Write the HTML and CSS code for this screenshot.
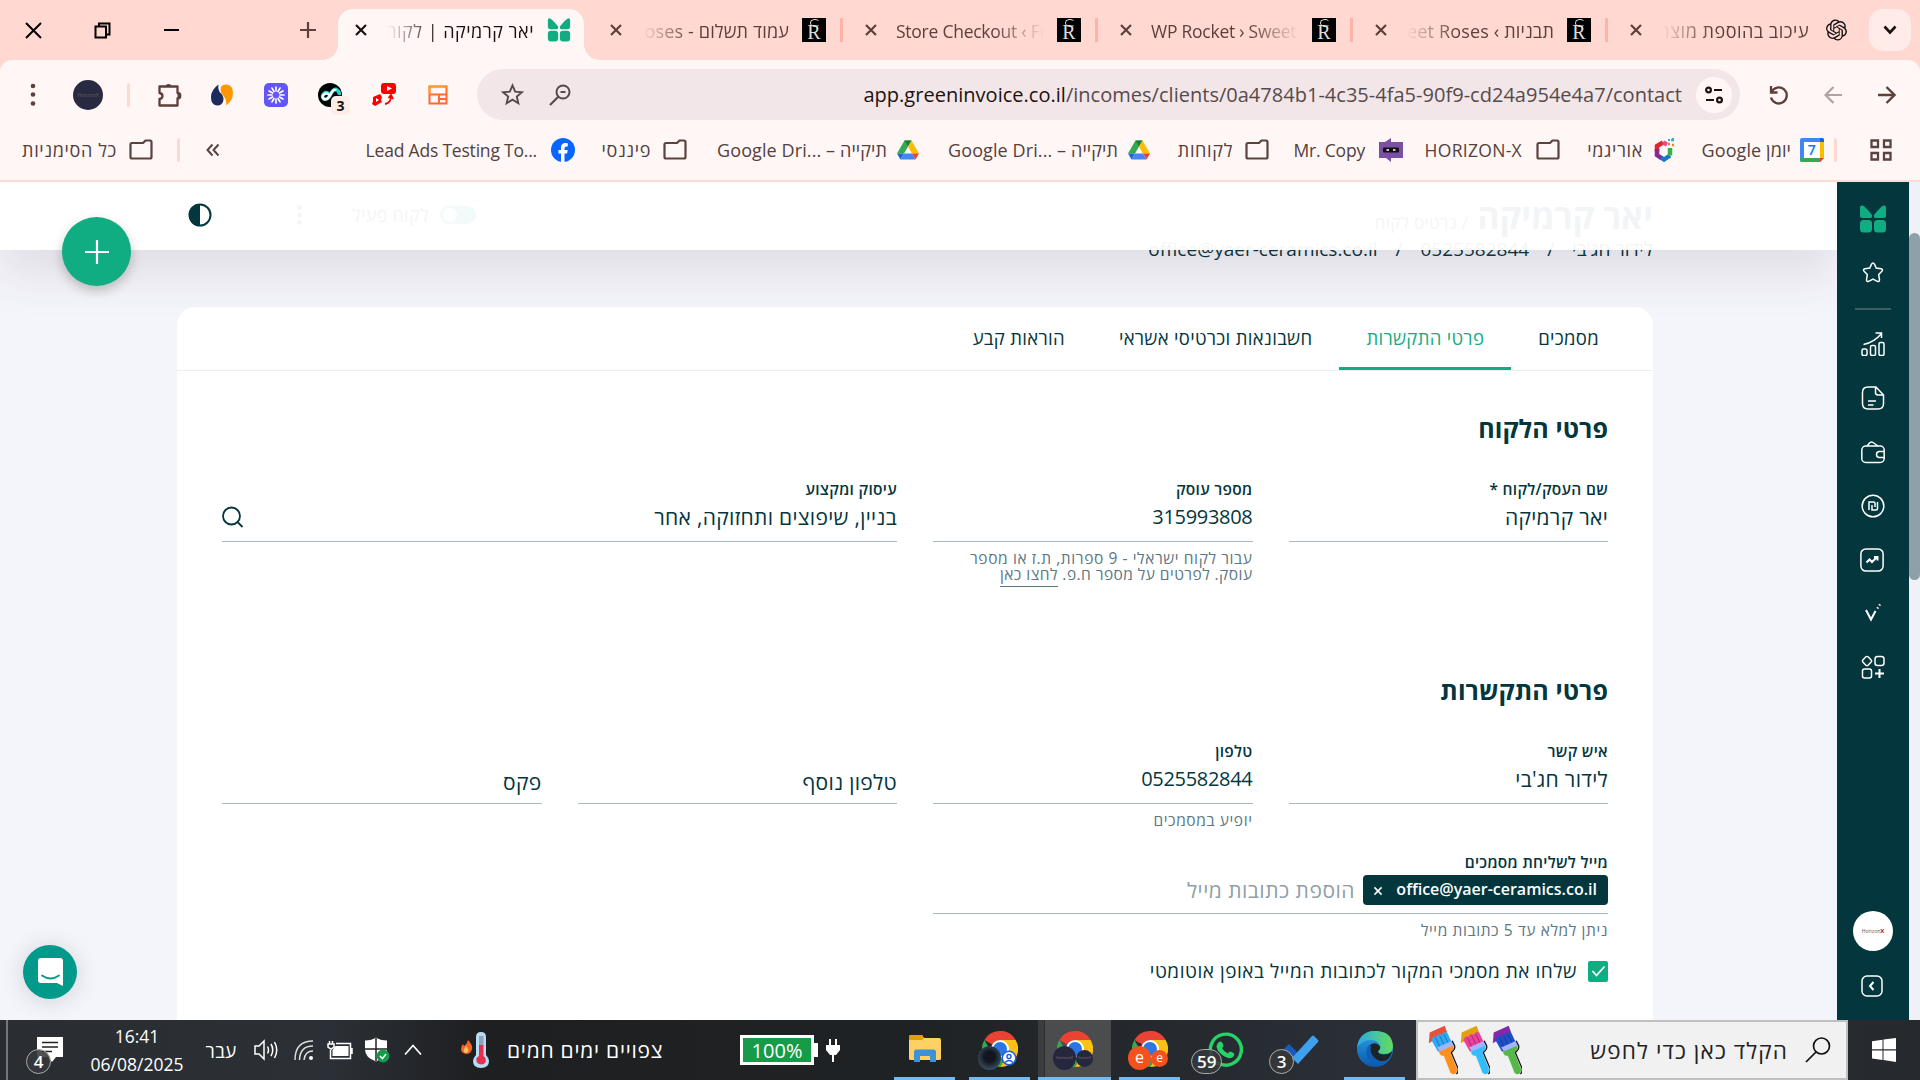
FILE: index.html
```html
<!DOCTYPE html>
<html lang="he">
<head>
<meta charset="utf-8">
<title>יאר קרמיקה | לקוח</title>
<link rel="stylesheet" href="styles.css">
</head>
<body>
<svg class="defs" aria-hidden="true">
  <symbol id="x" viewBox="0 0 14 14"><path d="M2 2l10 10M12 2L2 12" fill="none" stroke="currentColor" stroke-width="2.2"/></symbol>
  <symbol id="folder" viewBox="0 0 24 24"><path d="M1.500 6.500q0-1.500 1.500-1.500h11l2.500-2.500h4.500q1.500 0 1.500 1.500v15q0 1.500-1.500 1.500H3q-1.500 0-1.500-1.500z" fill="none" stroke="#5a4240" stroke-width="2.200" stroke-linejoin="round"/></symbol>
  <symbol id="drive" viewBox="0 0 24 24"><path d="M8.500 2.500h7L8 15.500H1z" fill="#34a853"/><path d="M8.500 2.500h7l-3.500 6z" fill="#188038"/><path d="M15.500 2.500L23 15.500h-7l-4-7z" fill="#fbbc04"/><path d="M1 15.500h7l-3.500 6z" fill="#1967d2"/><path d="M8 15.500h8l3.500 6h-15z" fill="#4285f4"/><path d="M16 15.500h7l-3.500 6z" fill="#ea4335"/></symbol>
  <symbol id="clover" viewBox="0 0 28 28"><path d="M1 2.500Q1 0 3.500 .5Q6 1 13 10v1.500q0 1.500-1.500 1.500h-8Q1 13 1 10.500zM27 2.500Q27 0 24.500 .5Q22 1 15 10v1.500q0 1.500 1.500 1.500h8Q27 13 27 10.500z" fill="#11ad82"/><rect x="1" y="15" width="12" height="12.500" rx="3.500" fill="#11ad82"/><rect x="15" y="15" width="12" height="12.500" rx="3.500" fill="#11ad82"/></symbol>
  <symbol id="chrome" viewBox="0 0 36 36"><path d="M18 18L2.400 9A18 18 0 0 1 33.600 9z" fill="#ea4335"/><path d="M18 0a18 18 0 0 1 15.600 9H18z" fill="#ea4335"/><path d="M33.600 9A18 18 0 0 1 18 36L25.800 22.500 18 9z" fill="#fbc116"/><path d="M2.400 9A18 18 0 0 0 18 36l7.800-13.500H10.200z" fill="#34a853"/><circle cx="18" cy="18" r="9" fill="#fff"/><circle cx="18" cy="18" r="7" fill="#2a76e8"/></symbol>
  <symbol id="brush" viewBox="0 0 36 60"><path d="M1 22L2 9 20 1l3 8-8 5-6 1-3 4z" fill="var(--tip)"/><path d="M4 18q3-6 6-4 3-5 6-2 3-5 7-3l7 15-18 8z" fill="var(--hair)"/><path d="M9 15l6 13M14 13l6 12M19 11l6 12" stroke="#0a1a50" stroke-opacity=".45" fill="none"/><path d="M11 27l18-8 3 6-4 4-12 5z" fill="#a3b4ff"/><path d="M13 32l17-7q2 5-3 8l8 20q0 6-5 6-3 0-4-4l-7-18q-5 0-6-5z" fill="var(--handle)"/><path d="M29 19l3 6q1 4-4 8l8 19q1 4-2 7" fill="none" stroke="#111" stroke-width="1.500"/></symbol>
</svg>

<header class="browser">
  <div class="tabstrip">
    <div class="window-controls">
      <svg width="17" height="17" viewBox="0 0 17 17"><path d="M1 1l15 15M16 1L1 16" stroke="#000" stroke-width="2"/></svg>
      <svg width="17" height="17" viewBox="0 0 17 17"><path d="M1.500 4.500h10.500v11H1.500zM5 4.500V1.500h10.500V12.500H12" fill="none" stroke="#000" stroke-width="2"/></svg>
      <svg width="17" height="17" viewBox="0 0 17 17"><path d="M1 8h15" stroke="#000" stroke-width="2"/></svg>
    </div>
    <div class="new-tab"><svg width="16" height="16" viewBox="0 0 16 16"><path d="M8 0v16M0 8h16" stroke="#5d3f3b" stroke-width="2.200"/></svg></div>
    <div class="tab active"><svg class="close"><use href="#x"/></svg><span class="tab-title fade-left" dir="rtl">יאר קרמיקה | לקוח</span><svg class="favicon"><use href="#clover"/></svg></div>
    <div class="tab"><svg class="close"><use href="#x"/></svg><span class="tab-title fade-left end">oses - עמוד תשלום</span><span class="favicon rose">R</span></div>
    <div class="tab"><svg class="close"><use href="#x"/></svg><span class="tab-title fade-right en">Store Checkout ‹ Fu</span><span class="favicon rose">R</span></div>
    <div class="tab"><svg class="close"><use href="#x"/></svg><span class="tab-title fade-right en">WP Rocket › Sweet</span><span class="favicon rose">R</span></div>
    <div class="tab"><svg class="close"><use href="#x"/></svg><span class="tab-title fade-left end">veet Roses ‹ תבניות</span><span class="favicon rose">R</span></div>
    <div class="tab last"><svg class="close"><use href="#x"/></svg><span class="tab-title fade-left" dir="rtl">עיכוב בהוספת מוצר</span><svg class="favicon gpt" viewBox="0 0 24 24"><path fill="#111" d="M22.282 9.821a5.985 5.985 0 0 0-.516-4.910 6.046 6.046 0 0 0-6.510-2.900A6.065 6.065 0 0 0 4.981 4.180a5.985 5.985 0 0 0-3.998 2.900 6.046 6.046 0 0 0 .743 7.097 5.980 5.980 0 0 0 .510 4.911 6.051 6.051 0 0 0 6.515 2.900A5.985 5.985 0 0 0 13.260 24a6.056 6.056 0 0 0 5.772-4.206 5.990 5.990 0 0 0 3.997-2.900 6.056 6.056 0 0 0-.747-7.073zM13.260 22.430a4.476 4.476 0 0 1-2.876-1.040l.141-.081 4.779-2.758a.795.795 0 0 0 .392-.681v-6.737l2.020 1.168a.071.071 0 0 1 .038.052v5.583a4.504 4.504 0 0 1-4.494 4.494zM3.600 18.304a4.470 4.470 0 0 1-.535-3.014l.142.085 4.783 2.759a.771.771 0 0 0 .780 0l5.843-3.369v2.332a.080.080 0 0 1-.033.062L9.740 19.950a4.500 4.500 0 0 1-6.140-1.646zM2.340 7.896a4.485 4.485 0 0 1 2.366-1.973V11.600a.766.766 0 0 0 .388.676l5.815 3.355-2.020 1.168a.076.076 0 0 1-.071 0l-4.830-2.786A4.504 4.504 0 0 1 2.340 7.872zm16.597 3.855l-5.833-3.387L15.119 7.200a.076.076 0 0 1 .071 0l4.830 2.791a4.494 4.494 0 0 1-.676 8.105v-5.678a.790.790 0 0 0-.407-.667zm2.010-3.023l-.141-.085-4.774-2.782a.776.776 0 0 0-.785 0L9.409 9.230V6.897a.066.066 0 0 1 .028-.061l4.830-2.787a4.500 4.500 0 0 1 6.680 4.660zm-12.640 4.135l-2.020-1.164a.080.080 0 0 1-.038-.057V6.075a4.500 4.500 0 0 1 7.375-3.453l-.142.080-4.778 2.758a.795.795 0 0 0-.393.681zm1.097-2.365l2.602-1.500 2.607 1.500v2.999l-2.597 1.500-2.607-1.500z"/></svg></div>
    <div class="tab-search"><svg width="14" height="10" viewBox="0 0 14 10"><path d="M1.500 1.500L7 7.500l5.500-6" fill="none" stroke="#1d1110" stroke-width="2.600"/></svg></div>
  </div>

  <div class="toolbar">
    <div><svg width="6" height="26" viewBox="0 0 6 26" fill="#5d3f3b"><circle cx="3" cy="4" r="2.300"/><circle cx="3" cy="12.500" r="2.300"/><circle cx="3" cy="21.500" r="2.300"/></svg></div>
    <div><span class="profile">HorizonX</span></div>
    <div><i class="divider"></i></div>
    <div><svg width="26" height="26" viewBox="0 0 26 26"><path d="M2.500 4.500h18v6.500a2.600 2.600 0 0 1 0 5.500v7h-18v-6.500q3-.5 3-3t-3-3z" fill="none" stroke="#5d3f3b" stroke-width="2.300" stroke-linejoin="round"/><path d="M8.500 5a3 3 0 0 1 6 0zM20.500 11a2.600 2.600 0 0 1 0 5.500z" fill="#5d3f3b"/></svg></div>
    <div><svg width="24" height="24" viewBox="0 0 24 24"><path d="M8.500 1.500Q1 7 1 14q0 8 6 8.500 6 0 6.500-6 0-4-3-6.500-3-3-2-8.500z" fill="#1d2a5e"/><path d="M16 22.500q7-5 7-12.500 0-8-6.500-8.500-6 0-6 5 0 3.500 3 6.500 3.500 3.500 2.500 9.500z" fill="#ff9800"/></svg></div>
    <div><svg width="24" height="24" viewBox="0 0 24 24"><rect width="24" height="24" rx="5" fill="#6355f6"/><g stroke="#fff" stroke-width="1.700" stroke-linecap="round"><path d="M12 4v4M12 16v4M4 12h4M16 12h4"/><path d="M12 4v4M12 16v4M4 12h4M16 12h4" transform="rotate(30 12 12)"/><path d="M12 4v4M12 16v4M4 12h4M16 12h4" transform="rotate(60 12 12)"/></g></svg></div>
    <div class="counter"><svg width="24" height="24" viewBox="0 0 24 24"><circle cx="12" cy="12" r="12" fill="#000"/><path d="M12 12q-3-4-6-1.500t0 5.500q3 1 5-2l3-5q2-4 5-2t2 5" fill="none" stroke="#25d6d0" stroke-width="3.500"/><path d="M12 13q-3-4-6-1.500t0 4.500q3 1 5-2l3-5q2-3 4-1.500" fill="none" stroke="#fff" stroke-width="2.400"/></svg><b>3</b></div>
    <div><svg width="26" height="26" viewBox="0 0 26 26"><rect x="10" y="1" width="15" height="11" rx="3" fill="#f00"/><path d="M16 4l5 2.500-5 2.500z" fill="#fff"/><path d="M2 15l7-3 2 3-1 3 1 2-7 4-3-2 1-3z" fill="#f00"/><path d="M5 16l3 2-3 2z" fill="#fff"/><path d="M14 22q6-1 6-8M17.500 16l2.500-3 2 4" fill="none" stroke="#f00" stroke-width="1.800"/></svg></div>
    <div><svg width="20" height="20" viewBox="0 0 20 20"><path d="M1.500 1.500h17v17h-17zM1.500 9.500h17M11 9.500v9M11 14h7" fill="none" stroke="#ff6b35" stroke-width="2"/><path d="M1.500 9V1.500h17" fill="none" stroke="#ff9d2e" stroke-width="2"/></svg></div>
    <div class="omnibox">
      <svg class="star" width="23" height="23" viewBox="0 0 24 24"><path d="M12 2.500l2.800 6.500 7 .6-5.300 4.600 1.600 6.900L12 17.400l-6.100 3.700 1.600-6.900L2.200 9.600l7-.6z" fill="none" stroke="#574a4b" stroke-width="2"/></svg>
      <svg class="lens" width="22" height="22" viewBox="0 0 22 22"><circle cx="14" cy="8" r="6.500" fill="none" stroke="#574a4b" stroke-width="2"/><path d="M9.500 12.500L1 21M11.500 8h5" stroke="#574a4b" stroke-width="2.200"/></svg>
      <span class="url"><b>app.greeninvoice.co.il</b>/incomes/clients/0a4784b1-4c35-4fa5-90f9-cd24a954e4a7/contact</span>
      <span class="site-info"><svg width="18" height="18" viewBox="0 0 18 18" fill="none" stroke="#1d1110" stroke-width="2.200"><circle cx="3.500" cy="4" r="2.400"/><path d="M9 4h8M1 14h8"/><circle cx="14.500" cy="14" r="2.400"/></svg></span>
    </div>
    <div><svg width="20" height="20" viewBox="0 0 20 20"><path d="M2 1v6.500h6.500M2.500 7A8 8 0 1 1 2 12.500" fill="none" stroke="#5d3f3b" stroke-width="2.300"/></svg></div>
    <div class="back"><svg width="18" height="18" viewBox="0 0 18 18"><path d="M18 9H2M9.500 1L1.500 9l8 8" fill="none" stroke="#b3a19f" stroke-width="2.200"/></svg></div>
    <div class="forward"><svg width="18" height="18" viewBox="0 0 18 18"><path d="M0 9h16M8.500 1l8 8-8 8" fill="none" stroke="#5d3f3b" stroke-width="2.400"/></svg></div>
  </div>

  <div class="bookmarks">
    <div><span>כל הסימניות</span><svg class="bm"><use href="#folder"/></svg></div>
    <div class="mid"><i class="divider"></i></div>
    <div class="more"><svg width="14" height="14" viewBox="0 0 14 14"><path d="M6.500 1.500L1.500 7l5 5.500M12.500 1.500L7.500 7l5 5.500" fill="none" stroke="#5a4240" stroke-width="2"/></svg></div>
    <div><span class="en">Lead Ads Testing To...</span><svg class="bm" viewBox="0 0 24 24"><circle cx="12" cy="12" r="12" fill="#0866ff"/><path d="M10 24v-8.500H7.500V12H10V9.500q0-4.500 4.500-4.500l2.300.2v3.200h-1.500q-1.800 0-1.800 1.800V12h3.200l-.6 3.500h-2.600V24z" fill="#fff"/></svg></div>
    <div><span>פיננסי</span><svg class="bm"><use href="#folder"/></svg></div>
    <div class="near"><span class="mix">Google Dri... – תיקייה</span><svg class="bm"><use href="#drive"/></svg></div>
    <div class="near"><span class="mix">Google Dri... – תיקייה</span><svg class="bm"><use href="#drive"/></svg></div>
    <div><span>לקוחות</span><svg class="bm"><use href="#folder"/></svg></div>
    <div><span class="en">Mr. Copy</span><svg class="bm" viewBox="0 0 24 24"><path d="M0 4h6l6-4v4h12v16H12v4l-5-4H0z" fill="#7b4fa3"/><rect x="4" y="9.500" width="16" height="5" rx="1" fill="#111"/><path d="M7.500 12h2.500M14 12h2.500" stroke="#fff" stroke-width="1.600"/></svg></div>
    <div><span class="en caps">HORIZON-X</span><svg class="bm"><use href="#folder"/></svg></div>
    <div class="near"><span>אוריגמי</span><svg class="bm" viewBox="0 0 24 24" fill="none" stroke-width="4.500"><path d="M5 14V8l6-3.500" stroke="#e0242c"/><path d="M11 4.500l4 2" stroke="#f0458a"/><path d="M5 11v6l5 3.500" stroke="#8e2490"/><path d="M9 19.500l3 2 6-4" stroke="#1878c8"/><path d="M18 17.500V10" stroke="#35b04a"/><path d="M19 2h3M16 6h2M20 7h2" stroke="#f58220" stroke-width="2.500"/><path d="M21 0v3M17 1v2" stroke="#19b5d8" stroke-width="2"/></svg></div>
    <div class="near"><span class="mix">Google יומן</span><svg class="bm" viewBox="0 0 24 24"><path d="M0 2q0-2 2-2h20q2 0 2 2v18l-4 4H2q-2 0-2-2z" fill="#4285f4"/><path d="M20 4h4v16h-4z" fill="#fbbc04"/><path d="M20 0h2q2 0 2 2v2h-4z" fill="#1967d2"/><path d="M0 20h20v4H2q-2 0-2-2z" fill="#34a853"/><path d="M20 20h4l-4 4z" fill="#ea4335"/><rect x="4" y="4" width="16" height="16" fill="#fff"/><text x="12" y="17" text-anchor="middle" font-size="14" font-family="Open Sans" font-weight="600" fill="#1a73e8">7</text></svg></div>
    <div class="mid"><i class="divider"></i></div>
    <div><svg width="22" height="22" viewBox="0 0 22 22" fill="none" stroke="#5a4240" stroke-width="2.300"><path d="M1.500 1.500h6.500v6.500H1.500zM14 1.500h6.500v6.500H14zM1.500 14h6.500v6.500H1.500zM14 14h6.500v6.500H14z"/></svg></div>
  </div>
</header>

<main class="app">
  <section class="page">
    <div class="client-head">
      <div class="client-status">
        <svg width="5" height="20" viewBox="0 0 5 20" fill="#03363d"><circle cx="2.500" cy="2.500" r="2.200"/><circle cx="2.500" cy="10" r="2.200"/><circle cx="2.500" cy="17.500" r="2.200"/></svg>
        <span>לקוח פעיל</span><i class="toggle"></i>
      </div>
      <div class="client-title" dir="rtl">
        <h1>יאר קרמיקה <small>/ כרטיס לקוח</small></h1>
        <p><span>לידור חג'בי</span><span>/</span><span>0525582844</span><span>/</span><span>office@yaer-ceramics.co.il</span></p>
      </div>
    </div>

    <div class="card" dir="rtl">
      <nav class="tabs">
        <a>מסמכים</a><a class="on">פרטי התקשרות</a><a>חשבונאות וכרטיסי אשראי</a><a>הוראות קבע</a>
      </nav>
      <h2>פרטי הלקוח</h2>
      <div class="fields first">
        <div class="field"><label>שם העסק/לקוח *</label><div class="value">יאר קרמיקה</div></div>
        <div class="field"><label>מספר עוסק</label><div class="value num">315993808</div>
          <p class="hint">עבור לקוח ישראלי - 9 ספרות, ת.ז או מספר<br><span class="tight">עוסק. לפרטים על מספר ח.פ. <u>לחצו כאן</u></span></p></div>
        <div class="field wide"><label>עיסוק ומקצוע</label><div class="value">בניין, שיפוצים ותחזוקה, אחר
          <svg width="22" height="22" viewBox="0 0 22 22"><circle cx="9.500" cy="10" r="8.500" fill="none" stroke="#03363d" stroke-width="1.800"/><path d="M15.500 16l5 5" stroke="#03363d" stroke-width="1.800"/></svg></div></div>
      </div>
      <h2>פרטי התקשרות</h2>
      <div class="fields second">
        <div class="field"><label>איש קשר</label><div class="value">לידור חג'בי</div></div>
        <div class="field"><label>טלפון</label><div class="value num">0525582844</div><p class="hint">יופיע במסמכים</p></div>
        <div class="field empty"><div class="value">טלפון נוסף</div></div>
        <div class="field empty"><div class="value">פקס</div></div>
      </div>
      <div class="fields mail">
        <div class="field wide"><label>מייל לשליחת מסמכים</label>
          <div class="mails"><span class="chip">office@yaer-ceramics.co.il<svg width="10" height="10"><use href="#x"/></svg></span><span class="placeholder">הוספת כתובות מייל</span></div>
          <p class="hint">ניתן למלא עד 5 כתובות מייל</p></div>
      </div>
      <div class="check"><i><svg width="15" height="12" viewBox="0 0 15 12"><path d="M1.500 6l4 4.500L13.500 1.500" fill="none" stroke="#fff" stroke-width="1.700"/></svg></i><span>שלחו את מסמכי המקור לכתובות המייל באופן אוטומטי</span></div>
    </div>

    <div class="topbar"><svg width="24" height="24" viewBox="0 0 24 24"><circle cx="12" cy="12" r="10.500" fill="#fff" stroke="#03363d" stroke-width="2"/><path d="M12 1a11 11 0 0 0 0 22z" fill="#03363d"/></svg></div>
    <div class="fab"><svg width="24" height="24" viewBox="0 0 24 24"><path d="M12 0v24M0 12h24" stroke="#fff" stroke-width="2.200"/></svg></div>
    <div class="chat"><svg width="25" height="28" viewBox="0 0 25 28"><path d="M3 0h19q3 0 3 3v25l-6-3H3q-3 0-3-3V3q0-3 3-3z" fill="#fff"/><path d="M4 17.500q8.500 6 17 0" fill="none" stroke="#00998a" stroke-width="1.800" stroke-linecap="round"/></svg></div>
  </section>

  <aside class="sidebar">
    <div><svg width="28" height="28"><use href="#clover"/></svg></div>
    <div><svg class="ic" viewBox="0 0 24 24"><path d="M10.500 3.200q1.500-2.400 3 0l1.700 3.900 4.800.7q2.500.6.900 2.500l-3.200 3.300.8 5.200q0 2.300-2.200 1.500L12 18l-4.300 2.300q-2.200.8-2.200-1.500l.8-5.200-3.200-3.300q-1.600-1.900.9-2.500l4.800-.7z"/></svg></div>
    <div><hr></div>
    <div><svg class="ic" viewBox="0 0 24 24"><rect x="1" y="17" width="5" height="6.500" rx="1.500"/><rect x="9.500" y="13.500" width="5" height="10" rx="1.500"/><rect x="18" y="10.500" width="5" height="13" rx="1.500"/><path d="M2.500 12.500Q13 10.500 20.500 1.500M14.500 1h6v5"/></svg></div>
    <div><svg class="ic" viewBox="0 0 24 24"><path d="M7 1h8l7.500 8v8.500q0 5.500-5.500 5.500H7q-5.500 0-5.500-5.500v-11Q1.500 1 7 1zM14.500 1v5.500q0 2.500 2.500 2.500h5.500M7 15h8M7 19h5.500"/></svg></div>
    <div><svg class="ic" viewBox="0 0 24 24"><rect x=".8" y="6" width="22.400" height="16.500" rx="4"/><path d="M6 6l3-3.500q1.500-1 3 0L17 6M23 11.500h-4.500a3 3 0 0 0 0 6H23"/></svg></div>
    <div><svg class="ic" viewBox="0 0 24 24"><circle cx="12" cy="12" r="10.800"/><path d="M8 16V8h4.500q1.500 0 1.500 1.500V13M16.500 8v6.500q0 1.500-1.500 1.500H11v-5"/></svg></div>
    <div><svg class="ic sq" viewBox="0 0 24 24"><rect x=".9" y=".9" width="22.200" height="22.200" rx="5"/><path d="M6.500 14.500l3-3 2.500 2.500 4.500-4.500M14 9h3.500v3.500" stroke-width="2"/></svg></div>
    <div><svg class="ic" viewBox="0 0 24 24"><path d="M5 9l5 9.500 4.500-8.500" stroke-width="2"/><path d="M16.300 7.500l.8-1.200M18.300 4.500l.8-1.200" stroke-width="2.200"/></svg></div>
    <div><svg class="ic" viewBox="0 0 24 24"><rect x="2.300" y="2.300" width="7.400" height="7.400" rx="1.500" transform="rotate(45 6 6)"/><rect x="14" y="1.500" width="9" height="9" rx="2.500"/><rect x="1.500" y="14" width="9" height="9" rx="2"/><path d="M18.500 14v9M14 18.500h9" stroke-width="2"/></svg></div>
    <div class="user"><span>Horizon<b>X</b></span></div>
    <div class="collapse"><svg class="ic sq" viewBox="0 0 24 24"><rect x="2" y="2" width="20" height="20" rx="5"/><path d="M13.500 8L10 12l3.500 4" stroke-width="2"/></svg></div>
  </aside>
  <div class="scrollbar"><i></i></div>
</main>

<footer class="taskbar">
  <div class="notif"><svg width="26" height="26" viewBox="0 0 26 26"><path d="M0 0h26v20h-7l-4 5-4-5H0z" fill="#fff"/><path d="M5 5.500h16M5 10h16M5 14.500h10" stroke="#222" stroke-width="1.300"/></svg><b class="badge">4</b></div>
  <div class="clock"><span>16:41</span><span>06/08/2025</span></div>
  <div class="lang">עבר</div>
  <div class="tray">
    <svg width="24" height="22" viewBox="0 0 24 22" fill="none" stroke="#fff" stroke-width="1.500"><path d="M1 7h4l5-5v18l-5-5H1zM13.500 7.500q2 3.500 0 7M17 5q3.500 6 0 12M20.500 3q4.500 8 0 16"/></svg>
    <svg width="22" height="22" viewBox="0 0 22 22" fill="none" stroke="#ddd" stroke-width="1.500"><path d="M1 21Q1 2 19 2M5.500 21Q6 7 19 7M10 21q1-9 9-9"/><circle cx="17" cy="19" r="2" fill="#fff" stroke="none"/></svg>
    <svg width="26" height="20" viewBox="0 0 26 20"><path d="M8.500 6h13v10h-16v-6z" fill="#fff"/><path d="M9 3.500h14.500v15H3.500V10M25 8v6M1 4h6v3l-3 2-3-2zM2.500 4V1M5.500 4V1" fill="none" stroke="#fff" stroke-width="1.500"/></svg>
    <svg width="26" height="26" viewBox="0 0 26 26"><path d="M1 3q7 0 11-3 4 3 11 3v9q0 8-11 12Q1 20 1 12z" fill="#fff" transform="translate(0 .5)"/><path d="M12 1v23M1 12h22" stroke="#222" stroke-width="1.500"/><circle cx="19" cy="19" r="6.500" fill="#149b49"/><path d="M16 19l2.500 2.500L22 17" fill="none" stroke="#fff" stroke-width="1.500"/></svg>
    <svg width="18" height="12" viewBox="0 0 18 12"><path d="M1 10.500L9 1.500l8 9" fill="none" stroke="#fff" stroke-width="1.700"/></svg>
  </div>
  <div class="weather">
    <svg width="30" height="36" viewBox="0 0 30 36"><path d="M7 8q5 5 4 9-1 5-6 5-5-1-5-5 0-3 2-5l1 2q3-2 4-6z" fill="#f4622d"/><path d="M5 14q3 3 2 6-2 2-4 0-1-3 2-6z" fill="#ffc352"/><path d="M15 5q0-5 5-5t5 5v18q3 3 3 6 0 7-8 7t-8-7q0-3 3-6z" fill="#b9dcf5"/><path d="M18 13h4.500v11l2 2q1.500 6-4 6.500-6-.5-5-6.500l2.500-2z" fill="#e5304f"/><path d="M18 4h4.500v9H18z" fill="#8fa3b5"/></svg>
    <span>צפויים ימים חמים</span>
  </div>
  <div class="power"><span>100%</span><i></i><svg width="14" height="23" viewBox="0 0 14 23"><path d="M3 0h2v6h4V0h2v6h3v5l-4 5H8v7H6v-7H4l-4-5V6h3z" fill="#fff"/></svg></div>
  <div class="apps">
    <div class="open"><svg width="32" height="28" viewBox="0 0 32 28"><path d="M0 2q0-2 2-2h11l2 3h15q2 0 2 2v19q0 1-2 1H2q-2 0-2-1z" fill="#ffd162"/><path d="M0 2q0-2 2-2h11l2 3-2 2H0z" fill="#e0a100"/><path d="M5 27V17q0-2.500 2.500-2.500h17Q27 14.500 27 17v10h-6v-6H11v6z" fill="#3c92d8"/></svg></div>
    <div class="open"><svg width="36" height="36"><use href="#chrome"/></svg><em class="pic night"></em><em class="pic acct"><svg width="16" height="16" viewBox="0 0 16 16"><circle cx="8" cy="8" r="6.800" fill="#fff" stroke="#1a5fe0" stroke-width="1.600"/><circle cx="8" cy="6.500" r="2" fill="none" stroke="#1a5fe0" stroke-width="1.400"/><path d="M4 12.500q4-4 8 0" fill="none" stroke="#1a5fe0" stroke-width="1.400"/></svg></em></div>
    <div class="open current"><svg width="36" height="36"><use href="#chrome"/></svg><em class="pic navy">HorizonX</em><em class="pic navy sm">HorizonX</em></div>
    <div class="open"><svg width="36" height="36"><use href="#chrome"/></svg><em class="pic orange">e</em><em class="pic orange sm">e</em></div>
    <div class="wa"><svg width="36" height="36" viewBox="0 0 36 36"><path d="M3.500 33l2-7.500A15.500 15.500 0 1 1 11 31z" fill="none" stroke="#25d366" stroke-width="3.400"/><path d="M12 10q2-1.500 3.500 1l1 2.500q0 1.500-1.500 2.500 2 4 6 5.500 1-2 2.500-2l3 1.500q1.500 1 0 3.500-3 3-8 .5-8-4-9-10.500 0-2.500 2.500-4.500z" fill="#25d366"/></svg><b class="badge">59</b></div>
    <div class="todo"><svg width="38" height="30" viewBox="0 0 38 30"><path d="M2 15l6-6 9 9-6 6z" fill="#195abd"/><path d="M11 23L31 1q1-1 2 0l4 4q1 1 0 2L17 29z" fill="#3fa0ee"/></svg><b class="badge">3</b></div>
    <div class="open"><svg width="36" height="36" viewBox="0 0 36 36"><defs><linearGradient id="eg" x1="0" x2="1"><stop offset="0" stop-color="#2ba8e8"/><stop offset="1" stop-color="#63dd5c"/></linearGradient><linearGradient id="eb" x1="0" y1="0" x2="0" y2="1"><stop offset="0" stop-color="#2aa5e5"/><stop offset="1" stop-color="#0b57ad"/></linearGradient></defs><circle cx="18" cy="18" r="18" fill="url(#eb)"/><path d="M0 17Q2 0 18 0q17 0 18 15 0 8-9 8-6 0-6-3 2-1 2-4-1-7-9-7Q4 9 0 17z" fill="url(#eg)"/><path d="M13 14q5-4 10 1 1 3-2 5 0 4 7 3.500 4 0 7-3-1 6-6 9-11 3-16-5-3-6 0-10.500z" fill="#1d2327"/><path d="M12 14q-5 6-1 13 4 6 11 8 6-1 9-5-6 2-12-2-7-5-5-13z" fill="#0f5fb5"/></svg></div>
  </div>
  <div class="search">
    <div class="brushes"><svg class="b1"><use href="#brush"/></svg><svg class="b2"><use href="#brush"/></svg><svg class="b3"><use href="#brush"/></svg></div>
    <span>הקלד כאן כדי לחפש</span>
    <svg width="26" height="26" viewBox="0 0 26 26"><circle cx="16.500" cy="9" r="8" fill="none" stroke="#111" stroke-width="1.700"/><path d="M11 15L1 25" stroke="#111" stroke-width="1.700"/></svg>
  </div>
  <div class="start"><svg width="24" height="24" viewBox="0 0 24 24"><path d="M0 3.300L10.500 1.800v9.500H0zM11.500 1.600L24 0v11.300H11.500zM0 12.500h10.500v9.400L0 20.500zM11.500 12.500H24V24l-12.500-1.900z" fill="#fff"/></svg></div>
</footer>
</body>
</html>
```
FILE: styles.css
```css
* { box-sizing: border-box; }
body { margin: 0; width: 1920px; height: 1080px; overflow: hidden; display: flex; flex-direction: column; font-family: "Open Sans", "Noto Sans", sans-serif; color: #03363d; background: #f4f5fa; }
.defs { position: absolute; width: 0; height: 0; }
svg { display: block; flex: none; }
h1, h2, p { margin: 0; }

/* Browser chrome */
.browser { height: 182px; background: #ffd9d1; flex: none; white-space: nowrap; }
.tabstrip { display: flex; height: 60px; align-items: center; }
.window-controls { display: flex; gap: 52px; padding-left: 25px; width: 282px; }
.new-tab { width: 51px; display: flex; justify-content: center; }
.tab { position: relative; width: 255px; height: 24px; display: flex; align-items: center; padding-left: 21px; color: #5d3f3b; border-right: 3px solid #ffb3a6; }
.tab.active { height: 51px; align-self: flex-end; padding-bottom: 9px; color: #1d1110; border: 0; z-index: 0; }
.tab.active::before { content: ""; position: absolute; z-index: -1; inset: 0 4px 0 5px; border-radius: 15px 15px 0 0; background: #fff7f5; }
.tab.active::after { content: ""; position: absolute; z-index: -1; left: -10px; right: -11px; bottom: 0; height: 15px; background: radial-gradient(circle 15px at 0 0, transparent 14.5px, #fff7f5 15px) 0 0 / 15px 15px no-repeat, radial-gradient(circle 15px at 15px 0, transparent 14.5px, #fff7f5 15px) 100% 0 / 15px 15px no-repeat; }
.tab.last { border: 0; }
.close { width: 14px; height: 14px; }
.tab-title { width: 147px; margin: 2px 0 0 19px; font-size: 18px; letter-spacing: .5px; line-height: 26px; overflow: hidden; }
.tab-title.end { display: flex; justify-content: flex-end; letter-spacing: .15px; }
.tab-title.en { font-size: 17.5px; letter-spacing: -.25px; margin-left: 18px; width: 148px; }
.fade-left { mask-image: linear-gradient(to right, transparent, #000 50px); }
.fade-right { mask-image: linear-gradient(to left, transparent, #000 50px); }
.favicon { width: 24px; height: 24px; margin-left: 13px; flex: none; }
.gpt { width: 21px; margin-left: 17px; }
.rose { position: relative; background: #000; color: #ddd; font: 20px/28px "Liberation Serif", serif; text-align: center; }
.rose::before { content: ""; position: absolute; left: 8px; top: 1px; width: 8px; height: 6px; border: 1.5px solid #ddd; border-right-color: transparent; border-radius: 50%; }
.tab-search { margin-left: 6px; width: 42px; height: 42px; border-radius: 14px; background: #ffebe7; display: grid; place-items: center; }
.toolbar { height: 60px; background: #fff7f5; border-radius: 12px 12px 0 0; padding: 9px 0 0 6px; display: grid; grid-template-columns: 54px 56px 24px 60px 44px 64px 44px 64px 61px 1263px 63px 45px 63px; }
.toolbar > div { display: flex; align-items: center; justify-content: center; height: 51px; }
.toolbar > div:nth-child(9) { padding-right: 17px; }
.toolbar > div:nth-child(11) { padding-left: 15px; }
.toolbar > .back { padding-left: 15px; }
.toolbar > .forward { padding-left: 15px; }
.profile { width: 30px; height: 30px; border-radius: 50%; background: #282a41; color: #6d5566; font-size: 5px; line-height: 30px; text-align: center; }
.divider { width: 3px; height: 24px; border-radius: 2px; background: #ffd9d1; }
.counter { position: relative; }
.counter b { position: absolute; left: 23px; top: 27px; width: 19px; height: 19px; border-radius: 5px; background: #ffece8; font-size: 14px; line-height: 19px; text-align: center; color: #111; }
.omnibox { border-radius: 26px; background: #f2e6e8; padding-right: 8px; }
.omnibox .lens { margin-left: 25px; }
.omnibox .star { margin-left: 24px; }
.url { margin-left: auto; font-size: 20px; letter-spacing: .02px; color: #574a4b; }
.url b { font-weight: 400; color: #1d1110; }
.site-info { width: 36px; height: 36px; margin-left: 14px; border-radius: 50%; background: #fff7f5; display: grid; place-items: center; }
.bookmarks { display: grid; grid-template-columns: 132px 50px 20px 352px 112px 233px 231px 118px 134px 157px 116px 148px 22px 46px; height: 62px; padding: 0 0 1px 21px; background: #fff7f5; border-bottom: 2px solid #fddad4; font-size: 18px; letter-spacing: .65px; color: #54403e; }
.bookmarks > div { display: flex; align-items: center; justify-content: flex-end; gap: 12px; }
.bookmarks > .mid { justify-content: center; }
.bookmarks > .more { padding-right: 3px; }
.bookmarks > .near { gap: 9px; }
.bookmarks .en { font-size: 17.5px; letter-spacing: -.2px; margin-right: 2px; }
.bookmarks .caps { letter-spacing: .3px; }
.bookmarks .mix { letter-spacing: .1px; }
.bm { width: 24px; height: 24px; }

/* Application */
.app { height: 838px; display: flex; overflow: hidden; }
.page { position: relative; width: 1837px; height: 838px; overflow: hidden; padding: 0 184px 0 177px; }
.client-head { display: flex; justify-content: space-between; height: 125px; padding-left: 120px; }
.client-status { display: flex; align-items: center; height: 66px; font-size: 18px; }
.client-status span { margin-left: 50px; width: 78px; letter-spacing: .3px; white-space: nowrap; }
.toggle { width: 36px; height: 18px; margin-left: 10px; border-radius: 9px; background: #11ad82; padding: 2px 3px; }
.toggle::after { content: ""; display: block; width: 14px; height: 14px; border-radius: 50%; background: #fff; }
.client-title h1 { font-size: 34px; line-height: 40px; padding-top: 14px; }
.client-title small { font-size: 17px; font-weight: 400; letter-spacing: .3px; }
.client-title p { display: flex; gap: 18px; margin-top: -7px; font-size: 19px; line-height: 26px; }
.card { position: relative; z-index: 2; height: 760px; background: #fff; border-radius: 18px 18px 0 0; }
.tabs { display: flex; height: 64px; padding: 0 27px; border-bottom: 1px solid #eeeff6; font-size: 18.5px; font-weight: 500; letter-spacing: .3px; }
.tabs a { padding: 0 27px; line-height: 62px; height: 63px; white-space: nowrap; }
.tabs .on { color: #11ad82; border-bottom: 3px solid #11ad82; }
.card h2 { margin: 37px 45px 0; font-size: 25px; line-height: 40px; letter-spacing: .1px; }
.fields { display: grid; grid-template-columns: repeat(4, 1fr); gap: 36px; margin: 30px 45px 0; }
.fields.first { height: 192px; }
.fields.first + h2 { margin-top: 0; }
.fields.second { height: 111px; margin-top: 30px; }
.fields.mail { height: 109px; margin-top: 0; }
.wide { grid-column: span 2; }
.field label { display: block; font-size: 15.5px; font-weight: 600; line-height: 22px; letter-spacing: .3px; }
.value { display: flex; justify-content: space-between; align-items: center; height: 42px; padding-bottom: 8px; border-bottom: 1px solid #a9b9c0; font-size: 21px; letter-spacing: .3px; }
.num { font-size: 20px; letter-spacing: -.3px; }
.empty .value { height: 64px; padding-top: 28px; }
.hint { margin-top: 8px; font-size: 15.5px; line-height: 16px; letter-spacing: .6px; color: #5b7883; white-space: nowrap; }
.hint .tight { letter-spacing: .45px; }
.hint u { text-decoration: none; border-bottom: 1px solid #5b7883; padding-bottom: 1px; }
.mails { display: flex; align-items: center; height: 41px; padding-bottom: 6px; border-bottom: 1px solid #a9b9c0; gap: 8px; }
.chip { display: flex; align-items: center; justify-content: space-between; width: 245px; height: 30px; padding: 0 11px 3px 10px; border-radius: 4px; background: #03363d; color: #fff; font-size: 16px; font-weight: 600; white-space: nowrap; }
.chip svg { margin-top: 5px; }
.placeholder { font-size: 21px; letter-spacing: .5px; color: #8fa0a8; }
.check { display: flex; align-items: center; gap: 11px; height: 22px; margin: 0 45px; font-size: 19px; letter-spacing: .53px; white-space: nowrap; }
.check i { width: 20px; height: 21px; border-radius: 2px; background: #11ad82; display: grid; place-items: center; }
.topbar { position: absolute; z-index: 1; left: 0; top: 0; width: 100%; height: 68px; padding: 21px 188px; background: rgba(255, 255, 255, .95); box-shadow: 0 24px 48px 0 rgba(60, 40, 60, .11); }
.fab { position: absolute; z-index: 3; left: 62px; top: 35px; width: 69px; height: 69px; border-radius: 50%; background: #11ad82; display: grid; place-items: center; box-shadow: 0 5px 12px rgba(0, 0, 0, .22); }
.chat { position: absolute; z-index: 3; left: 23px; top: 763px; width: 54px; height: 54px; border-radius: 50%; background: #00998a; display: grid; place-items: center; box-shadow: 0 2px 24px rgba(0, 0, 0, .15); }
.sidebar { width: 72px; background: #03363d; display: flex; flex-direction: column; padding-top: 10px; }
.sidebar > div { height: 53.8px; display: flex; align-items: center; justify-content: center; }
.sidebar > div:nth-child(3) { height: 18px; }
.sidebar hr { width: 36px; height: 2px; border: 0; margin: 0; background: #3a5f66; }
.ic { width: 24px; height: 24px; fill: none; stroke: #fff; stroke-width: 1.5; }
.ic.sq { margin-right: 2px; }
.sidebar .user { margin-top: auto; height: 54px; }
.user span { width: 40px; height: 40px; border-radius: 50%; background: #fff; font-size: 5px; line-height: 40px; text-align: center; color: #555; }
.user b { color: #b01030; font-size: 6px; }
.sidebar .collapse { height: 55px; margin-bottom: 7px; }
.scrollbar { width: 11px; background: #f0f1f7; padding-top: 51px; }
.scrollbar i { display: block; height: 347px; border-radius: 6px; background: #8fa0a9; }

/* Taskbar */
.taskbar { height: 60px; display: flex; align-items: center; color: #fff; background: linear-gradient(to right, #2a2d31, #2b3036 330px, #1e1f21 480px, #1f2224 900px, #2b3038 1400px, #26292d); white-space: nowrap; padding-left: 6px; }
.notif { position: relative; width: 80px; height: 60px; border-left: 2px solid #75787b; padding: 17px 0 0 29px; }
.badge { position: absolute; border: 1px solid #aaa; border-radius: 14px; background: #35383be0; height: 25px; min-width: 25px; padding: 0 5px; font-size: 17px; line-height: 23px; font-weight: 600; text-align: center; }
.notif .badge { left: 18px; top: 29px; }
.clock { width: 102px; height: 56px; font-size: 17.5px; line-height: 28px; display: flex; flex-direction: column; align-items: center; }
.clock span { display: block; }
.lang { width: 66px; text-align: center; font-size: 18.5px; letter-spacing: .4px; }
.tray { display: flex; align-items: center; width: 166px; gap: 11px; }
.tray svg:nth-child(1) { margin-right: 5px; }
.tray svg:nth-child(5) { margin-left: 3px; }
.weather { display: flex; align-items: center; width: 242px; padding-left: 41px; gap: 16px; font-size: 21px; letter-spacing: .75px; }
.power { display: flex; align-items: center; width: 232px; padding-left: 78px; }
.power span { width: 74px; height: 30px; border: 3px solid #fff; background: #169b49; font-size: 20px; line-height: 25px; text-align: center; }
.power i { width: 4px; height: 14px; background: #fff; margin-right: 8px; }
.apps { display: flex; gap: 14px; width: 511px; height: 60px; }
.apps > div { position: relative; width: 61px; height: 60px; display: grid; place-items: center; flex: none; }
.apps > .open { border-bottom: 3px solid #76b9ed; }
.apps > .current { width: 73px; margin: 0 -6px; background: linear-gradient(to right, #3b3c3e 6px, #2b2d30 6px 7px, #4b4c4e 7px); }
.pic { position: absolute; left: 9px; top: 26px; width: 23px; height: 24px; border-radius: 50%; font-style: normal; font-size: 16px; line-height: 22px; text-align: center; color: #fff; }
.current .pic { left: 15px; }
.pic.sm, .pic.acct { left: 32px; top: 30px; width: 17px; height: 17px; font-size: 12px; line-height: 15px; }
.current .pic.sm { left: 38px; }
.night { background: radial-gradient(circle at 50% 45%, #12161e 30%, #4d7183); }
.orange { background: #f4511e; }
.current .navy { background: #25273f; font-size: 4px; line-height: 24px; color: #8d6d7c; }
.current .navy.sm { font-size: 3px; line-height: 17px; }
.wa .badge { left: -3px; top: 29px; }
.todo .badge { left: 0; top: 29px; }
.search { display: flex; align-items: center; width: 432px; height: 60px; margin-left: 11px; border: 2px solid #bfbfbf; background: #f1f1f1; color: #222; padding: 0 15px 0 10px; font-size: 22.5px; letter-spacing: 1.1px; }
.search > span { margin-left: auto; margin-right: 17px; }
.brushes { display: flex; gap: 2px; }
.brushes svg { width: 30px; height: 50px; }
.b1 { --tip: #e8503a; --hair: #2fa9f5; --handle: #ff8f1f; }
.b2 { --tip: #e0a010; --hair: #ec3f97; --handle: #35bdfb; }
.b3 { --tip: #8528a8; --hair: #1f4fc8; --handle: #55b848; }
.start { margin-left: 24px; }
```
